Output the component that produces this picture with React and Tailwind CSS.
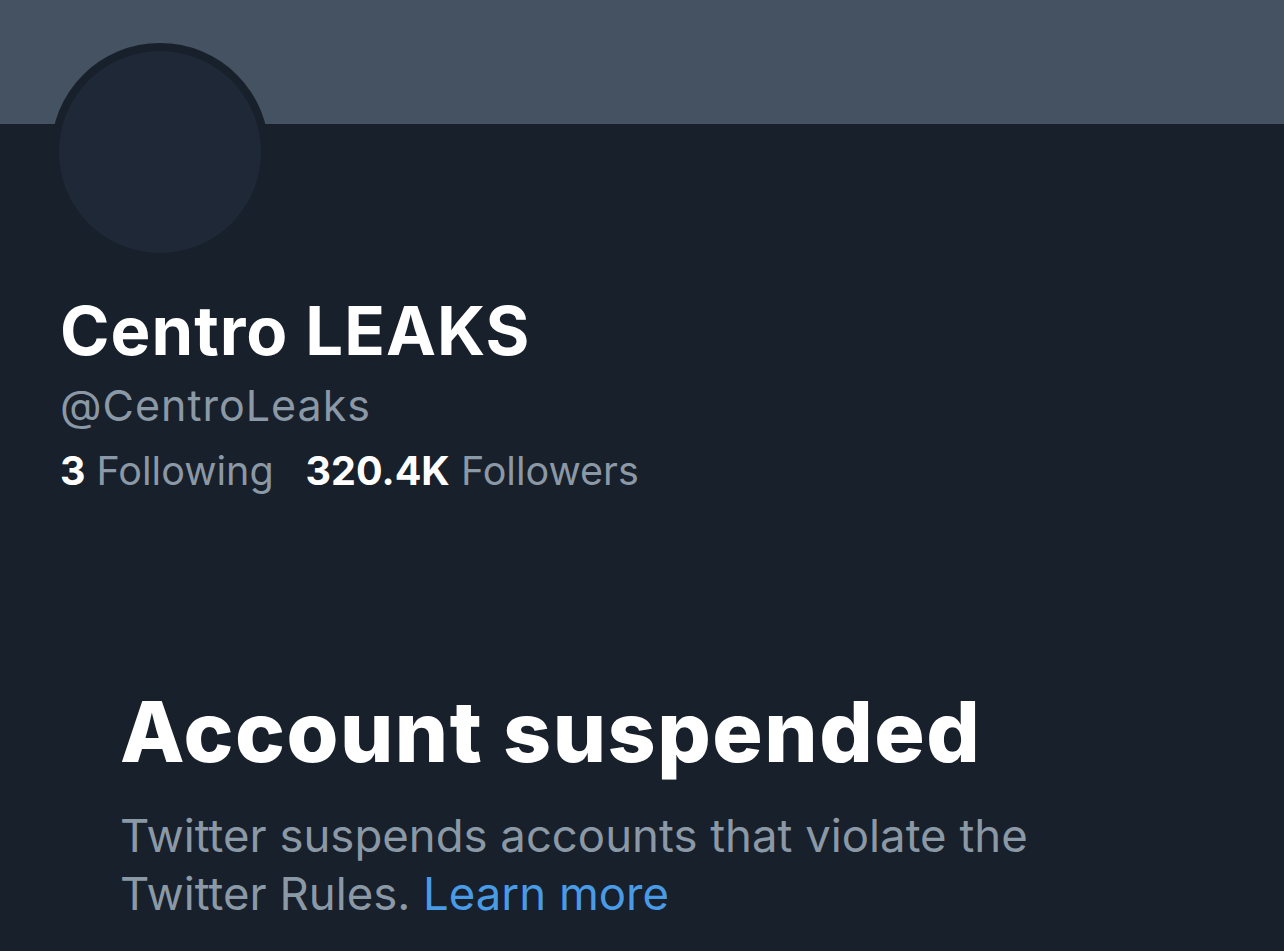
export default function App() {
  return (
    <div className="min-h-screen w-full bg-[#18202b] font-['Inter','Liberation_Sans',sans-serif] overflow-hidden">
      {/* banner */}
      <div className="h-[124px] bg-[#455261]" />

      <div className="pl-[51px]">
        {/* avatar */}
        <div className="-mt-[81px] w-[218px] h-[218px] rounded-full bg-[#18202b] p-[8px]">
          <div className="w-full h-full rounded-full bg-[#1f2836]" />
        </div>
      </div>

      <div className="pl-[60px]">
        <div className="mt-[36px] text-[67px] leading-[67px] font-bold text-white tracking-[1px]">Centro LEAKS</div>
        <div className="mt-[20px] text-[43px] leading-[43px] text-[#8b98a5] tracking-[1px]">@CentroLeaks</div>
        <div className="mt-[24px] flex gap-[32px] text-[39.5px] leading-[40px]">
          <div>
            <span className="font-bold text-white">3</span>
            <span className="text-[#8b98a5]"> Following</span>
          </div>
          <div>
            <span className="font-bold text-white">320.4K</span>
            <span className="text-[#8b98a5]"> Followers</span>
          </div>
        </div>
      </div>

      <div className="pl-[120px] pr-[60px]">
        <div className="mt-[199px] text-[84px] leading-[84px] font-extrabold text-white tracking-[1.5px]">Account suspended</div>
        <div className="mt-[33px] text-[45.5px] leading-[58px] text-[#8b98a5]">
          Twitter suspends accounts that violate the
          <br />
          Twitter Rules. <span className="text-[#4a9be6]">Learn more</span>
        </div>
      </div>
    </div>
  );
}
